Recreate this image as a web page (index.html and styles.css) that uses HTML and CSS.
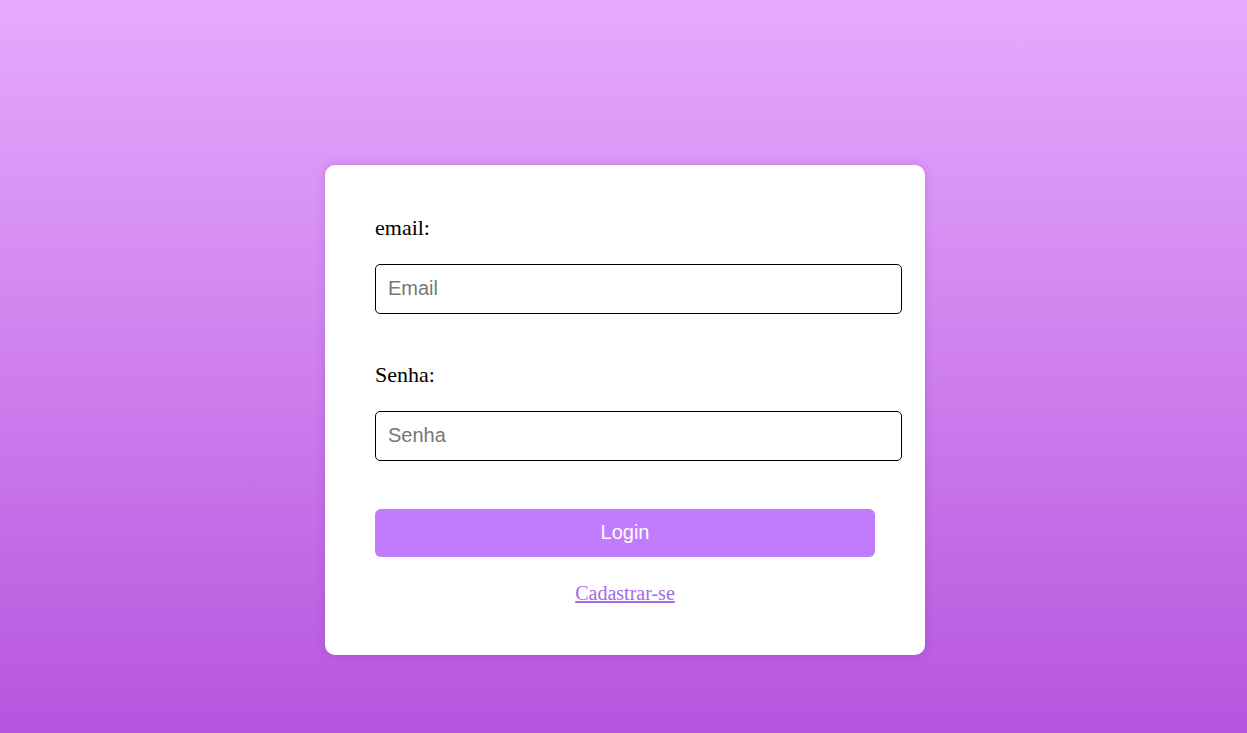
FILE: index.html
```html
<!DOCTYPE html>
<html lang="pt">
<head>
<meta charset="utf-8">
<title>Login</title>
<link rel="stylesheet" href="styles.css">
</head>
<body>
<main class="page">
  <form class="card">
    <label class="label" for="email">email:</label>
    <input class="field" id="email" type="email" placeholder="Email">
    <label class="label" for="senha">Senha:</label>
    <input class="field" id="senha" type="password" placeholder="Senha">
    <button class="btn" type="button">Login</button>
    <a class="link" href="#">Cadastrar-se</a>
  </form>
</main>
</body>
</html>
```
FILE: styles.css
```css
html, body {
  margin: 0;
  padding: 0;
  height: 100%;
}
body {
  background: linear-gradient(to bottom, #e6aafd, #b655de);
  font-family: "Liberation Serif", "Times New Roman", serif;
}
.page {
  box-sizing: border-box;
  min-height: 100%;
  padding: 86px 0 0 3px;
  display: flex;
  align-items: center;
  justify-content: center;
}
.card {
  width: 500px;
  padding: 50px;
  background: #fff;
  border-radius: 10px;
  box-shadow: 0 0 10px rgba(90, 20, 120, 0.18);
  display: flex;
  flex-direction: column;
  align-items: flex-start;
}
.label {
  font-size: 22px;
  line-height: 25px;
  color: #000;
  margin-bottom: 24px;
}
.field {
  width: 501px;
  box-sizing: content-box;
  padding: 12px;
  height: 24px;
  font-family: "Liberation Sans", Arial, sans-serif;
  font-size: 20px;
  border: 1px solid #000;
  border-radius: 5px;
  margin: 0 0 48px;
  outline: none;
}
.field::placeholder {
  color: #777;
}
.btn {
  width: 500px;
  height: 48px;
  border: none;
  border-radius: 6px;
  background: #c07cfd;
  color: #fff;
  font-family: "Liberation Sans", Arial, sans-serif;
  font-size: 20px;
  margin-bottom: 25px;
  cursor: pointer;
}
.link {
  align-self: center;
  font-size: 20px;
  line-height: 23px;
  color: #a56ae6;
  text-decoration: underline;
}
```
